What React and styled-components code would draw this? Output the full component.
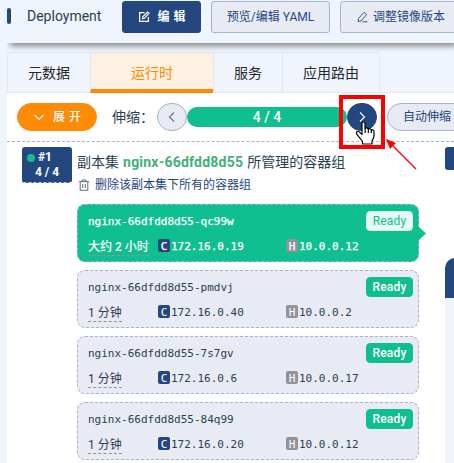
import React from 'react';
import styled, { createGlobalStyle } from 'styled-components';

const navy = '#24477f';
const green = '#10bf90';
const orange = '#ff8a05';
const dash = '#a3b3d0';

const Global = createGlobalStyle`
  * { box-sizing: border-box; }
  body {
    margin: 0;
    overflow: hidden;
    background: #f0f4fc;
    color: #2c3e50;
    font: 14px/20px Roboto, "Noto Sans CJK SC", sans-serif;
  }
`;
const Page = styled.div`
  position: relative;
  width: 454px;
  height: 463px;
  padding-left: 7px;
  overflow: hidden;
  white-space: nowrap;
`;
const Header = styled.header`
  position: relative;
  display: flex;
  height: 43px;
  background: #f0f4fc;
  box-shadow: 3px 3px 6px rgba(0, 0, 0, 0.45);
  clip-path: inset(0 0 -12px 0);
`;
const Marker = styled.i`
  flex: none;
  width: 4px;
  height: 16px;
  margin-top: 8px;
  border-radius: 2px;
  background: ${navy};
`;
const Kind = styled.div`
  flex: none;
  width: 95px;
  margin: 6px 0 0 16px;
`;
const HeaderButton = styled.button`
  display: flex;
  flex: none;
  align-items: center;
  justify-content: ${(p) => (p.$start ? 'flex-start' : 'center')};
  width: ${(p) => p.$width}px;
  height: 32px;
  margin: 1px 10px 0 0;
  padding: ${(p) => (p.$start ? '0 0 0 16px' : '0')};
  border: 1px solid ${(p) => (p.$primary ? navy : dash)};
  border-radius: 3px;
  background: ${(p) => (p.$primary ? navy : '#e8ebf4')};
  color: ${(p) => (p.$primary ? '#fff' : navy)};
  font: ${(p) => (p.$primary ? 700 : 400)} 12px/16px Roboto, "Noto Sans CJK SC", sans-serif;
`;
const ButtonText = styled.span`
  margin-left: ${(p) => p.$gap || 0}px;
  word-spacing: ${(p) => p.$word || 0}px;
`;
const Tabs = styled.nav`
  display: flex;
  height: 50px;
  padding-top: 9px;
  border-bottom: 1px solid #e4e7ed;
`;
const TabList = styled.div`
  display: flex;
  height: 41px;
  border: 1px solid #e2e6ee;
  border-bottom: 0;
  border-radius: 4px 4px 0 0;
`;
const Tab = styled.div`
  width: ${(p) => p.$width}px;
  height: 40px;
  padding-top: 10px;
  border-left: ${(p) => (p.$first ? 0 : 1)}px solid #e2e6ee;
  border-bottom: ${(p) => (p.$active ? `4px solid ${orange}` : 0)};
  background: ${(p) => (p.$active ? '#fff1e2' : 'transparent')};
  color: ${(p) => (p.$active ? orange : '#25282d')};
  text-align: center;
`;
const Panel = styled.main`
  height: 370px;
  background: #fff;
`;
const Toolbar = styled.div`
  display: flex;
  align-items: center;
  height: 49px;
  padding-left: 10px;
  border-bottom: 1px dashed ${dash};
`;
const Pill = styled.button`
  display: flex;
  flex: none;
  align-items: center;
  justify-content: center;
  width: ${(p) => p.$width}px;
  height: 28px;
  padding: 0;
  border: 1px solid ${(p) => p.$border};
  border-radius: 15px;
  background: ${(p) => p.$bg};
  color: ${(p) => p.$color};
  font: 500 12px/16px Roboto, "Noto Sans CJK SC", sans-serif;
`;
const ScaleLabel = styled.div`
  flex: none;
  width: 45px;
  margin-left: 15px;
  line-height: 20px;
`;
const Progress = styled.div`
  flex: none;
  width: 160px;
  height: 20px;
  border-radius: 10px;
  background: ${green};
  color: #fff;
  font: 500 14px/21px Roboto, sans-serif;
  text-align: center;
`;
const AutoPill = styled(Pill)`
  justify-content: flex-start;
  margin-left: 10px;
  padding-left: 15px;
  font-weight: 400;
`;
const Body = styled.div`
  display: flex;
  padding: 5px 0 0 15px;
`;
const Revision = styled.div`
  flex: none;
  width: 50px;
  height: 36px;
  padding-top: 3px;
  border-bottom: 1px dashed #c2cde0;
  border-radius: 3px;
  background: ${navy};
  color: #fff;
  font: 700 12px/15px Roboto, sans-serif;
  text-align: center;
`;
const RevisionName = styled.div`
  display: flex;
  align-items: center;
  gap: 3px;
  padding-left: 5px;
`;
const Dot = styled.i`
  width: 8px;
  height: 8px;
  border-radius: 50%;
  background: ${green};
`;
const ReplicaSet = styled.section`
  flex: none;
  width: 342px;
  margin-left: 5px;
`;
const Title = styled.div`
  height: 20px;
  margin-top: 5px;
  line-height: 20px;
  word-spacing: 0.6px;
`;
const SetName = styled.b`
  color: #42b07b;
  letter-spacing: 0.22px;
`;
const Remove = styled.div`
  display: flex;
  align-items: center;
  gap: 5px;
  height: 18px;
  margin: 4px 0 10px;
  padding-left: 1px;
  color: ${navy};
  font-size: 12px;
  line-height: 18px;
`;
const Card = styled.article`
  position: relative;
  height: 58px;
  margin-bottom: 8px;
  padding: 7px 5px 0 10px;
  border: 1px dashed ${dash};
  border-radius: 8px;
  background: ${(p) => (p.$active ? green : '#e8ebf4')};
  color: ${(p) => (p.$active ? '#fff' : '#2c3e50')};
  font: 400 11px/18px "DejaVu Sans Mono", monospace;
`;
const CardTop = styled.div`
  display: flex;
  justify-content: space-between;
  height: 26px;
`;
const PodName = styled.div`
  padding-top: 1px;
  line-height: 18px;
  -webkit-text-stroke: ${(p) => (p.$active ? '0.25px' : '0')};
`;
const Ready = styled.div`
  width: 47px;
  height: 20px;
  margin-top: -1px;
  border: 1px solid ${(p) => (p.$active ? '#cff2e9' : green)};
  border-radius: 4px;
  background: ${(p) => (p.$active ? '#e7f9f4' : green)};
  color: ${(p) => (p.$active ? green : '#fff')};
  font: ${(p) => (p.$active ? 400 : 500)} 12px/18px Roboto, sans-serif;
  letter-spacing: 0.15px;
  text-align: center;
`;
const CardInfo = styled.div`
  display: grid;
  grid-template-columns: 70px 128px auto;
  height: 19px;
`;
const Age = styled.span`
  justify-self: start;
  height: 18px;
  border-bottom: 1px dashed #929292;
  font: ${(p) => (p.$active ? 500 : 400)} 12px/18px Roboto, "Noto Sans CJK SC", sans-serif;
`;
const Address = styled.span`
  display: flex;
  align-items: flex-start;
  gap: 1px;
  line-height: 18px;
  -webkit-text-stroke: ${(p) => (p.$active ? '0.25px' : '0')};
`;
const Letter = styled.b`
  width: 12px;
  height: 13px;
  margin-top: 1px;
  border-radius: 2px;
  background: ${(p) => (p.$host ? '#909399' : navy)};
  color: #fff;
  font-weight: 400;
  line-height: 16px;
  text-align: center;
`;
const Notch = styled.i`
  position: absolute;
  top: 21px;
  right: -8px;
  width: 8px;
  height: 15px;
  background: ${green};
  clip-path: polygon(0 0, 100% 50%, 0 100%);
`;
const SideColumn = styled.aside`
  flex: none;
  width: 20px;
  margin-left: 26px;
`;
const SideBadge = styled.div`
  height: 23px;
  border-radius: 3px 0 0 3px;
  background: ${navy};
`;
const SidePanel = styled.div`
  height: 210px;
  margin-top: 88px;
  border-top: 40px solid ${navy};
  border-radius: 10px 0 0 0;
  background: #f0f3f9;
`;
const Annotation = styled.svg`
  position: absolute;
  top: 90px;
  left: 335px;
`;

const EditIcon = () => (
  <svg width="12" height="12" viewBox="0 0 12 12" fill="none" stroke="currentColor" strokeWidth="1.2">
    <path d="M6.5 1.6H1.6v8.8h8.8V6M4.5 7.7l.3-2L9.6 1 11 2.3 6.4 7.3z" />
  </svg>
);
const PencilIcon = () => (
  <svg width="12" height="12" viewBox="0 0 12 12" fill="none" stroke="currentColor" strokeWidth="0.9">
    <path d="M1.5 7.5 7 1.3 9.5 3.6 4 10l-2.9.5zM5.5 10.8h5" />
  </svg>
);
const Chevron = ({ d, size = 12 }) => (
  <svg width={size} height={size} viewBox="0 0 12 12" fill="none" stroke="currentColor" strokeWidth="1.1">
    <path d={d} />
  </svg>
);
const TrashIcon = () => (
  <svg width="12" height="12" viewBox="0 0 12 12" fill="none" stroke="#4c5c78" strokeWidth="0.9">
    <path d="M1 2.7h10M4 2.7V1h4v1.7M2.2 2.7v8.6h7.6V2.7M4.7 5v4M7.3 5v4" />
  </svg>
);

const pods = [
  { name: 'qc99w', age: '大约 2 小时', ip: '172.16.0.19', host: '10.0.0.12', active: true },
  { name: 'pmdvj', age: '1 分钟', ip: '172.16.0.40', host: '10.0.0.2' },
  { name: '7s7gv', age: '1 分钟', ip: '172.16.0.6', host: '10.0.0.17' },
  { name: '84q99', age: '1 分钟', ip: '172.16.0.20', host: '10.0.0.12' },
];

const PodCard = ({ pod }) => (
  <Card $active={pod.active}>
    <CardTop>
      <PodName $active={pod.active}>nginx-66dfdd8d55-{pod.name}</PodName>
      <Ready $active={pod.active}>Ready</Ready>
    </CardTop>
    <CardInfo>
      <Age $active={pod.active}>{pod.age}</Age>
      <Address $active={pod.active}><Letter>C</Letter>{pod.ip}</Address>
      <Address $active={pod.active}><Letter $host>H</Letter>{pod.host}</Address>
    </CardInfo>
    {pod.active && <Notch />}
  </Card>
);

export default function App() {
  return (
    <Page>
      <Global />
      <Header>
        <Marker />
        <Kind>Deployment</Kind>
        <HeaderButton $primary $width={79}><EditIcon /><ButtonText $gap={8} $word={1}>编 辑</ButtonText></HeaderButton>
        <HeaderButton $width={119}><ButtonText>预览/编辑 YAML</ButtonText></HeaderButton>
        <HeaderButton $width={130} $start><PencilIcon /><ButtonText $gap={4}>调整镜像版本</ButtonText></HeaderButton>
      </Header>
      <Tabs>
        <TabList>
          <Tab $first $width={82}>元数据</Tab>
          <Tab $active $width={123}>运行时</Tab>
          <Tab $width={69}>服务</Tab>
          <Tab $width={97}>应用路由</Tab>
        </TabList>
      </Tabs>
      <Panel>
        <Toolbar>
          <Pill $width={80} $bg={orange} $border={orange} $color="#fff">
            <Chevron d="M1.5 4 6 8.5 10.5 4" /><ButtonText $gap={8} $word={1}>展 开</ButtonText>
          </Pill>
          <ScaleLabel>伸缩：</ScaleLabel>
          <Pill $width={30} $bg="#e8ebf4" $border={dash} $color="#65738d"><Chevron d="M8 1.5 3.5 6 8 10.5" /></Pill>
          <Progress>4 / 4</Progress>
          <Pill $width={30} $bg={navy} $border={navy} $color="#fff"><Chevron d="M4 1.5 8.5 6 4 10.5" /></Pill>
          <AutoPill $width={80} $bg="#e8ebf4" $border={dash} $color={navy}>自动伸缩</AutoPill>
        </Toolbar>
        <Body>
          <Revision>
            <RevisionName><Dot />#1</RevisionName>
            <div>4 / 4</div>
          </Revision>
          <ReplicaSet>
            <Title>副本集 <SetName>nginx-66dfdd8d55</SetName> 所管理的容器组</Title>
            <Remove><TrashIcon />删除该副本集下所有的容器组</Remove>
            {pods.map((pod) => <PodCard key={pod.name} pod={pod} />)}
          </ReplicaSet>
          <SideColumn><SideBadge /><SidePanel /></SideColumn>
        </Body>
      </Panel>
      <Annotation width="90" height="85" viewBox="0 0 90 85" fill="none">
        <rect x="6" y="7" width="42" height="50" stroke="#f00" strokeWidth="4" />
        <path d="M52 50 81 79" stroke="#f00" strokeWidth="1.2" />
        <path d="m51 49 10 4-6 6z" fill="#f00" />
        <path d="M27 33.5c0-2 3-2 3 0v5c1-1.2 3-.6 3.2.6 1-.9 2.7-.4 3 .9 1.2-.7 2.8 0 2.8 1.6v4.2c0 2.5-1.5 3.5-2 5.2v3H27.5v-2.5l-5.7-7.3c-1.5-2 1-3.8 2.8-2l2.4 2.3zM30.2 38v5M33.3 39v4M36.3 40v3" fill="#fff" stroke="#000" strokeWidth="1.2" strokeLinejoin="round" />
      </Annotation>
    </Page>
  );
}
